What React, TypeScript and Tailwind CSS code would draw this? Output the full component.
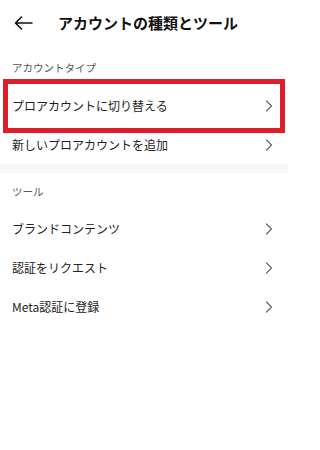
const accountItems = ['プロアカウントに切り替える', '新しいプロアカウントを追加'];
const toolItems = ['ブランドコンテンツ', '認証をリクエスト', 'Meta認証に登録'];

function Chevron() {
  return (
    <svg width="8" height="12" viewBox="0 0 8 12" fill="none" className="shrink-0">
      <path d="M1.5 1 L6.5 6 L1.5 11" stroke="#666" strokeWidth="1.2" strokeLinecap="round" strokeLinejoin="round" />
    </svg>
  );
}

function Row({ label, highlighted }: { label: string; highlighted?: boolean }) {
  return (
    <div className="relative flex h-[39px] items-center justify-between pl-[12px] pr-[15px]">
      <span className="text-[12px] leading-[16px] text-[#222]">{label}</span>
      <Chevron />
      {highlighted && (
        <div className="pointer-events-none absolute -top-[7px] -bottom-[8px] left-[3px] right-[3px] border-[5px] border-[#dc1f2b]" />
      )}
    </div>
  );
}

export default function App() {
  return (
    <div
      className="h-[450px] w-[288px] bg-white"
      style={{ fontFamily: '"Noto Sans CJK JP", "Noto Sans", sans-serif' }}
    >
      <header className="flex h-[46px] items-center pl-[14px]">
        <svg width="19" height="14" viewBox="0 0 19 14" fill="none">
          <path d="M18 7 H1.5 M7.5 1 L1.5 7 L7.5 13" stroke="#111" strokeWidth="1.6" strokeLinecap="round" strokeLinejoin="round" />
        </svg>
        <h1 className="ml-[25px] text-[15px] font-bold leading-[20px] text-[#111]">アカウントの種類とツール</h1>
      </header>

      <section>
        <div className="h-[40px] pl-[12px] pt-[14px] text-[10.5px] leading-[16px] text-[#555]">アカウントタイプ</div>
        {accountItems.map((item, key) => (
          <Row key={key} label={item} highlighted={key === 0} />
        ))}
      </section>

      <div className="h-[9px] bg-[#f7f7f7]" />

      <section>
        <div className="h-[36px] pl-[12px] pt-[11px] text-[10.5px] leading-[16px] text-[#555]">ツール</div>
        {toolItems.map((item, key) => (
          <Row key={key} label={item} />
        ))}
      </section>
    </div>
  );
}
